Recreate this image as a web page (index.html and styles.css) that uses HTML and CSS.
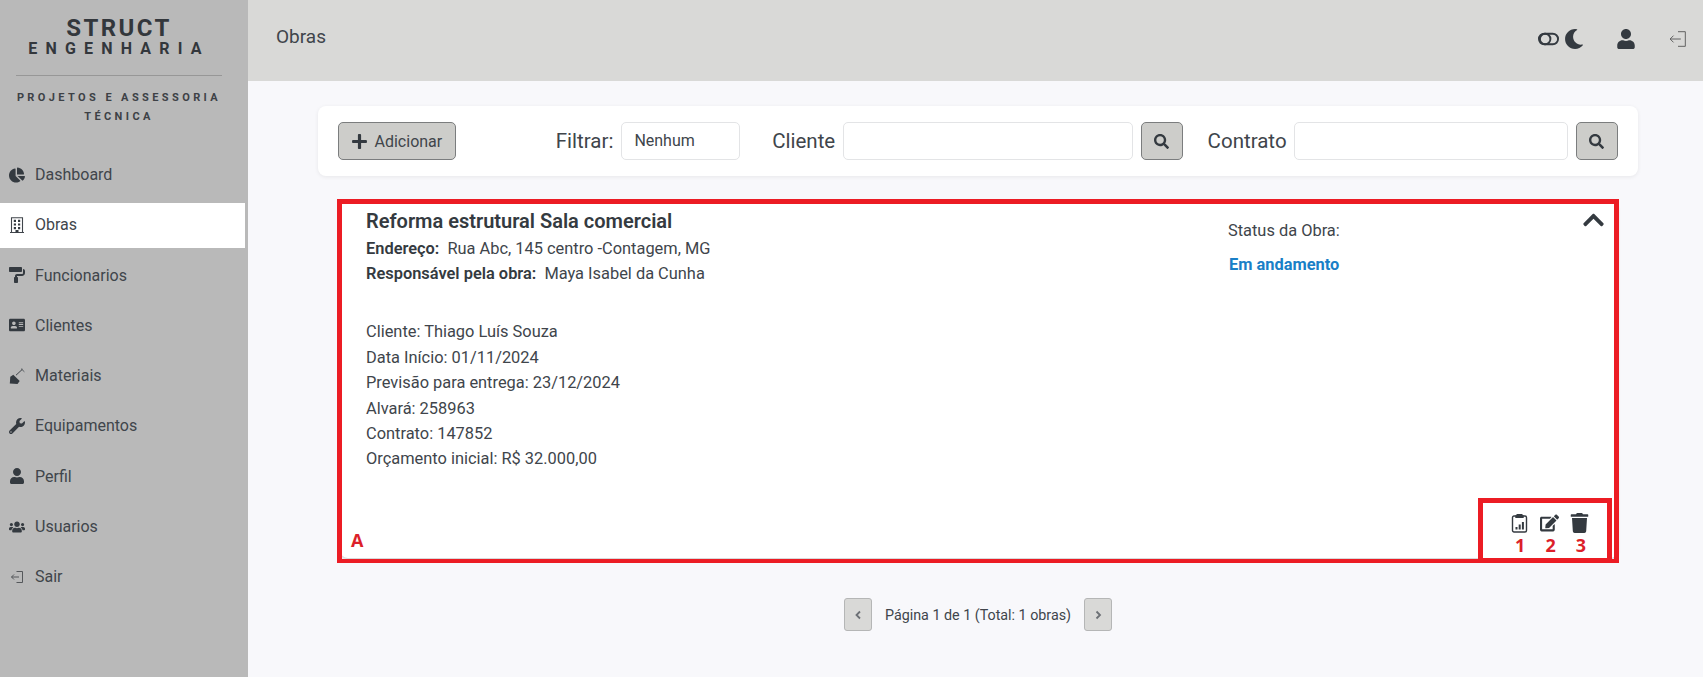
FILE: index.html
```html
<!DOCTYPE html>
<html lang="pt-BR">
<head>
	<meta charset="UTF-8">
	<title>Obras</title>
	<link rel="stylesheet" href="styles.css">
</head>
<body>
<div class="app">
	<aside class="sidebar">
		<div class="logo">
			<div class="logoMain">STRUCT</div>
			<div class="logoSub">ENGENHARIA</div>
			<hr class="logoLine">
			<div class="logoText">PROJETOS E ASSESSORIA<br>TÉCNICA</div>
		</div>
		<nav class="nav">
			<a class="navItem"><svg class="navIcon" viewBox="0 0 544 512"><path d="M527.79 288H290.5l158.03 158.03c6.04 6.04 15.98 6.53 22.19.68 38.7-36.46 65.32-85.61 73.13-140.86 1.34-9.46-6.51-17.85-16.06-17.85zm-15.83-64.8C503.72 103.74 408.26 8.28 288.8.04 279.68-.59 272 7.1 272 16.24V240h223.77c9.14 0 16.82-7.68 16.19-16.8zM224 288V50.71c0-9.55-8.39-17.4-17.84-16.06C86.99 51.49-4.1 155.6.14 280.37 4.5 408.51 114.83 513.59 243.03 511.98c50.4-.63 96.97-16.87 135.26-44.03 7.9-5.6 8.42-17.23 1.57-24.08L224 288z"/></svg>Dashboard</a>
			<a class="navItem active"><svg class="navIcon" viewBox="0 0 16 16"><path d="M1 15.500h14M2.500 15.500V.8h11v14.700" fill="none" stroke="currentColor" stroke-width="1.100"/><path d="M4.800 2.800h2.200V5H4.800zM9 2.800h2.200V5H9zM4.800 6.400h2.200v2.200H4.800zM9 6.400h2.200v2.200H9zM4.800 10h2.200v2.200H4.800zM9 10h2.200v2.200H9zM6.500 13h3v2.500h-3z"/></svg>Obras</a>
			<a class="navItem"><svg class="navIcon" viewBox="0 0 512 512"><path d="M416 128V32c0-17.67-14.33-32-32-32H32C14.33 0 0 14.33 0 32v96c0 17.67 14.33 32 32 32h352c17.67 0 32-14.33 32-32zm32-64v128c0 17.67-14.33 32-32 32H256c-35.35 0-64 28.65-64 64v32c-17.67 0-32 14.33-32 32v128c0 17.67 14.33 32 32 32h64c17.67 0 32-14.33 32-32V352c0-17.67-14.33-32-32-32v-32h160c53.02 0 96-42.98 96-96v-64c0-35.35-28.65-64-64-64z"/></svg>Funcionarios</a>
			<a class="navItem"><svg class="navIcon" viewBox="0 0 576 512"><path d="M528 32H48C21.5 32 0 53.500 0 80v352c0 26.5 21.500 48 48 48h480c26.5 0 48-21.5 48-48V80c0-26.5-21.5-48-48-48zm-352 96c35.3 0 64 28.7 64 64s-28.7 64-64 64-64-28.7-64-64 28.7-64 64-64zm112 236.8c0 10.6-10 19.2-22.4 19.2H86.4C74 384 64 375.400 64 364.8v-19.200c0-31.8 30.1-57.6 67.2-57.6h5c12.3 5.1 25.7 8 39.8 8s27.600-2.900 39.800-8h5c37.100 0 67.200 25.800 67.200 57.600v19.200zM512 312c0 4.400-3.600 8-8 8H360c-4.400 0-8-3.600-8-8v-16c0-4.400 3.600-8 8-8h144c4.400 0 8 3.600 8 8v16zm0-64c0 4.400-3.600 8-8 8H360c-4.400 0-8-3.600-8-8v-16c0-4.400 3.600-8 8-8h144c4.400 0 8 3.600 8 8v16zm0-64c0 4.400-3.600 8-8 8H360c-4.400 0-8-3.600-8-8v-16c0-4.400 3.600-8 8-8h144c4.400 0 8 3.600 8 8v16z"/></svg>Clientes</a>
			<a class="navItem"><svg class="navIcon" viewBox="0 0 16 16"><path d="M.8 15.600l.5-6.800 3-2 6.400 6.200-2.200 3z"/><path d="M7 7.200l6.500-6" fill="none" stroke="currentColor" stroke-width="1"/><path d="M12 .6l3.400 3.200" fill="none" stroke="currentColor" stroke-width=".8"/></svg>Materiais</a>
			<a class="navItem"><svg class="navIcon" viewBox="0 0 512 512"><path d="M507.73 109.1c-2.24-9.03-13.54-12.09-20.12-5.51l-74.36 74.36-67.88-11.31-11.31-67.88 74.36-74.36c6.62-6.62 3.43-17.9-5.66-20.16-47.38-11.74-99.55.91-136.58 37.93-39.64 39.64-50.55 97.1-34.05 147.2L18.74 402.76c-24.99 24.99-24.99 65.51 0 90.5 24.99 24.99 65.51 24.99 90.5 0l213.21-213.21c50.12 16.71 107.47 5.68 147.37-34.22 37.07-37.07 49.7-89.32 37.91-136.73zM64 472c-13.25 0-24-10.75-24-24 0-13.26 10.75-24 24-24s24 10.74 24 24c0 13.25-10.75 24-24 24z"/></svg>Equipamentos</a>
			<a class="navItem"><svg class="navIcon" viewBox="0 0 448 512"><path d="M224 256c70.7 0 128-57.3 128-128S294.7 0 224 0 96 57.3 96 128s57.3 128 128 128zm89.6 32h-16.7c-22.2 10.2-46.9 16-72.9 16s-50.6-5.8-72.9-16h-16.7C60.2 288 0 348.2 0 422.4V464c0 26.5 21.5 48 48 48h352c26.5 0 48-21.5 48-48v-41.6c0-74.2-60.2-134.4-134.4-134.4z"/></svg>Perfil</a>
			<a class="navItem"><svg class="navIcon" viewBox="0 0 640 512"><path d="M96 224c35.3 0 64-28.7 64-64s-28.7-64-64-64-64 28.7-64 64 28.7 64 64 64zm448 0c35.3 0 64-28.7 64-64s-28.7-64-64-64-64 28.7-64 64 28.7 64 64 64zm32 32h-64c-17.6 0-33.5 7.1-45.1 18.6 40.3 22.1 68.9 62 75.1 109.4h66c17.7 0 32-14.3 32-32v-32c0-35.3-28.7-64-64-64zm-256 0c61.9 0 112-50.1 112-112S381.9 32 320 32 208 82.1 208 144s50.1 112 112 112zm76.8 32h-8.3c-20.8 10-43.9 16-68.5 16s-47.6-6-68.5-16h-8.3C179.6 288 128 339.6 128 403.2V432c0 26.5 21.5 48 48 48h288c26.5 0 48-21.5 48-48v-28.8c0-63.6-51.6-115.2-115.2-115.2zm-223.7-13.4C161.5 263.1 145.6 256 128 256H64c-35.3 0-64 28.7-64 64v32c0 17.7 14.3 32 32 32h65.9c6.3-47.4 34.9-87.3 75.2-109.4z"/></svg>Usuarios</a>
			<a class="navItem"><svg class="navIcon lineIcon" viewBox="0 0 16 16"><path d="M7.500 2.500h6v11h-6M10 8H2.500M5 5.500L2.500 8 5 10.500"/></svg>Sair</a>
		</nav>
	</aside>

	<div class="content">
		<header class="topBar">
			<div class="pageTitle">Obras</div>
			<div class="topIcons">
				<div class="themeToggle">
					<svg class="toggleIcon" viewBox="0 0 22 14" fill="none" stroke="currentColor" stroke-width="2"><rect x="1" y="1.500" width="20" height="11" rx="5.500"/><circle cx="7.500" cy="7" r="5.500"/></svg>
					<svg class="moonIcon" viewBox="0 0 512 512"><path d="M283.211 512c78.962 0 151.079-35.925 198.857-94.792 7.068-8.708-.639-21.43-11.562-19.35-124.203 23.654-238.262-71.576-238.262-196.954 0-72.222 38.662-138.635 101.498-174.394 9.686-5.512 7.25-20.197-3.756-22.23A258.156 258.156 0 0 0 283.211 0c-141.309 0-256 114.511-256 256 0 141.309 114.511 256 256 256z"/></svg>
				</div>
				<svg class="userIcon" viewBox="0 0 448 512"><path d="M224 256c70.7 0 128-57.3 128-128S294.7 0 224 0 96 57.3 96 128s57.3 128 128 128zm89.6 32h-16.7c-22.2 10.2-46.9 16-72.9 16s-50.6-5.8-72.9-16h-16.7C60.2 288 0 348.2 0 422.4V464c0 26.5 21.5 48 48 48h352c26.5 0 48-21.5 48-48v-41.6c0-74.2-60.2-134.4-134.4-134.4z"/></svg>
				<svg class="exitIcon" viewBox="0 0 16 16" fill="none" stroke="currentColor" stroke-width=".8"><path d="M8 1.500h6.500v13H8M10.500 8H1M4 5L1 8l3 3"/></svg>
			</div>
		</header>

		<main class="pageBody">
			<section class="toolbar">
				<button class="btn addBtn"><svg class="plusIcon" viewBox="0 0 448 512"><path d="M416 208H272V64c0-17.67-14.33-32-32-32h-32c-17.67 0-32 14.33-32 32v144H32c-17.67 0-32 14.33-32 32v32c0 17.67 14.33 32 32 32h144v144c0 17.67 14.33 32 32 32h32c17.67 0 32-14.33 32-32V304h144c17.67 0 32-14.33 32-32v-32c0-17.67-14.33-32-32-32z"/></svg>Adicionar</button>
				<label class="fieldLabel filterLabel">Filtrar:</label>
				<div class="field selectField">Nenhum</div>
				<label class="fieldLabel clientLabel">Cliente</label>
				<div class="field clientField"></div>
				<button class="btn searchBtn"><svg class="searchIcon" viewBox="0 0 512 512"><path d="M505 442.700L405.300 343c-4.500-4.500-10.600-7-17-7H372c27.600-35.300 44-79.700 44-128C416 93.100 322.900 0 208 0S0 93.100 0 208s93.100 208 208 208c48.300 0 92.700-16.400 128-44v16.300c0 6.400 2.500 12.500 7 17l99.700 99.700c9.400 9.400 24.600 9.400 33.900 0l28.300-28.300c9.400-9.400 9.400-24.600.1-34zM208 336c-70.700 0-128-57.200-128-128 0-70.700 57.200-128 128-128 70.700 0 128 57.200 128 128 0 70.700-57.200 128-128 128z"/></svg></button>
				<label class="fieldLabel contractLabel">Contrato</label>
				<div class="field contractField"></div>
				<button class="btn searchBtn"><svg class="searchIcon" viewBox="0 0 512 512"><path d="M505 442.700L405.300 343c-4.500-4.500-10.600-7-17-7H372c27.600-35.300 44-79.700 44-128C416 93.100 322.900 0 208 0S0 93.100 0 208s93.100 208 208 208c48.300 0 92.700-16.400 128-44v16.300c0 6.400 2.500 12.500 7 17l99.700 99.700c9.400 9.400 24.600 9.400 33.900 0l28.300-28.300c9.400-9.400 9.400-24.600.1-34zM208 336c-70.700 0-128-57.200-128-128 0-70.700 57.200-128 128-128 70.700 0 128 57.200 128 128 0 70.700-57.200 128-128 128z"/></svg></button>
			</section>

			<section class="card">
				<div class="cardTop">
					<div class="cardInfo">
						<h2 class="cardTitle">Reforma estrutural Sala comercial</h2>
						<p class="line"><b>Endereço:</b>&nbsp; Rua Abc, 145 centro -Contagem, MG</p>
						<p class="line"><b>Responsável pela obra:</b>&nbsp; Maya Isabel da Cunha</p>
						<div class="details">
							<p class="line">Cliente: Thiago Luís Souza</p>
							<p class="line">Data Início: 01/11/2024</p>
							<p class="line">Previsão para entrega: 23/12/2024</p>
							<p class="line">Alvará: 258963</p>
							<p class="line">Contrato: 147852</p>
							<p class="line">Orçamento inicial: R$ 32.000,00</p>
						</div>
					</div>
					<div class="cardStatus">
						<p class="statusLabel">Status da Obra:</p>
						<p class="statusValue">Em andamento</p>
					</div>
					<svg class="chevronIcon" viewBox="0 0 448 512"><path d="M240.971 130.524l194.343 194.343c9.373 9.373 9.373 24.569 0 33.941l-22.667 22.667c-9.357 9.357-24.522 9.375-33.901.04L224 227.495 69.255 381.516c-9.379 9.335-24.544 9.317-33.901-.04l-22.667-22.667c-9.373-9.373-9.373-24.569 0-33.941L207.03 130.525c9.372-9.373 24.568-9.373 33.941-.001z"/></svg>
				</div>
				<div class="cardActions">
					<svg class="actionIcon" viewBox="0 0 16 20"><path d="M2.500 3h11a1.500 1.500 0 0 1 1.500 1.500v13a1.500 1.500 0 0 1-1.500 1.500h-11A1.500 1.500 0 0 1 1 17.500v-13A1.500 1.500 0 0 1 2.500 3z" fill="none" stroke="currentColor" stroke-width="1.400"/><path d="M5 1h6v1.200h1.200V5H3.800V2.200H5zM4 14h2v2.500H4zM7.200 11.500h2v5h-2zM10.400 9h2v7.500h-2z"/></svg>
					<svg class="actionIcon" viewBox="0 0 576 512"><path d="M402.600 83.200l90.200 90.200c3.800 3.800 3.800 10 0 13.800L274.400 405.600l-92.800 10.300c-12.400 1.400-22.900-9.100-21.500-21.500l10.300-92.800L388.800 83.200c3.800-3.800 10-3.800 13.800 0zm162-22.900l-48.800-48.800c-15.200-15.200-39.900-15.200-55.200 0l-35.400 35.400c-3.800 3.800-3.800 10 0 13.800l90.200 90.200c3.800 3.800 10 3.800 13.800 0l35.400-35.400c15.200-15.300 15.200-40 0-55.200zM384 346.200V448H64V128h229.800c3.200 0 6.200-1.300 8.500-3.500l40-40c7.600-7.600 2.200-20.500-8.500-20.500H48C21.500 64 0 85.500 0 112v352c0 26.500 21.500 48 48 48h352c26.500 0 48-21.500 48-48V306.200c0-10.700-12.900-16-20.500-8.500l-40 40c-2.200 2.300-3.500 5.300-3.500 8.500z"/></svg>
					<svg class="actionIcon" viewBox="0 0 448 512"><path d="M432 32H312l-9.400-18.700A24 24 0 0 0 281.100 0H166.800a23.720 23.720 0 0 0-21.400 13.300L136 32H16A16 16 0 0 0 0 48v32a16 16 0 0 0 16 16h416a16 16 0 0 0 16-16V48a16 16 0 0 0-16-16zM53.200 467a48 48 0 0 0 47.900 45h245.800a48 48 0 0 0 47.900-45L416 128H32z"/></svg>
				</div>
				<!-- red marks drawn over the screenshot -->
				<div class="markOuter"><span class="markLetter">A</span></div>
				<div class="markInner">
					<span class="markNum">1</span>
					<span class="markNum">2</span>
					<span class="markNum">3</span>
				</div>
			</section>

			<div class="pager">
				<button class="pageBtn"><svg class="pageArrow" viewBox="0 0 10 12" fill="none" stroke="currentColor" stroke-width="1.800"><path d="M7 2.500L3.500 6 7 9.500"/></svg></button>
				<span class="pageText">Página 1 de 1 (Total: 1 obras)</span>
				<button class="pageBtn"><svg class="pageArrow" viewBox="0 0 10 12" fill="none" stroke="currentColor" stroke-width="1.800"><path d="M3.500 2.500L7 6 3.500 9.500"/></svg></button>
			</div>
		</main>
	</div>
</div>
</body>
</html>
```

FILE: styles.css
```css
html, body
{
	margin: 0;
	padding: 0;
	height: 100%;
	overflow: hidden;
	font-family: Roboto, "Liberation Sans", sans-serif;
	color: #343a40;
	background: #f8f8fb;
}

.app
{
	display: flex;
	height: 677px;
}

/* sidebar */
.sidebar
{
	width: 248px;
	flex: none;
	background: #b9b9b9;
}

.logo
{
	padding: 16px 26px 0 16px;
	text-align: center;
	height: 138px;
	box-sizing: border-box;
}

.logoMain
{
	font-size: 24px;
	font-weight: 700;
	letter-spacing: 2.4px;
	line-height: 24px;
	color: #33373c;
}

.logoSub
{
	font-size: 16px;
	font-weight: 700;
	letter-spacing: 8.2px;
	line-height: 18px;
	color: #33373c;
}

.logoLine
{
	border: none;
	border-top: 1px solid #979797;
	margin: 17px 0 12px;
}

.logoText
{
	font-size: 11px;
	font-weight: 700;
	letter-spacing: 3.4px;
	line-height: 19px;
	white-space: nowrap;
	color: #3d4146;
}

.nav
{
	display: flex;
	flex-direction: column;
	gap: 5.3px;
	padding-top: 15px;
}

.navItem
{
	display: flex;
	align-items: center;
	gap: 10px;
	height: 45px;
	width: 245px;
	padding: 0 0 2px 9px;
	box-sizing: border-box;
	font-size: 16px;
	color: #40454b;
}

.navItem.active
{
	background: #fff;
}

.navIcon
{
	width: 16px;
	height: 16px;
	flex: none;
	fill: #343a40;
}

.navIcon.lineIcon
{
	fill: none;
	stroke: #4a4d50;
	stroke-width: 0.9;
}

/* top bar */
.content
{
	flex: 1;
	min-width: 0;
	display: flex;
	flex-direction: column;
}

.topBar
{
	height: 81px;
	flex: none;
	display: flex;
	align-items: center;
	justify-content: space-between;
	padding: 0 16px 0 28px;
	background: #d9d9d7;
}

.pageTitle
{
	font-size: 19px;
	color: #40454b;
	margin-bottom: 8px;
}

.topIcons
{
	display: flex;
	align-items: center;
	margin-bottom: 4px;
	color: #343a40;
	fill: #343a40;
}

.themeToggle
{
	display: flex;
	align-items: center;
	gap: 5px;
	margin-right: 33px;
}

.toggleIcon
{
	width: 21px;
	height: 14px;
}

.moonIcon
{
	width: 20px;
	height: 20px;
}

.userIcon
{
	width: 18px;
	height: 20px;
	margin-right: 34px;
}

.exitIcon
{
	width: 18px;
	height: 18px;
	color: #555;
}

/* toolbar */
.pageBody
{
	padding: 25px 65px 0 70px;
}

.toolbar
{
	display: flex;
	align-items: center;
	height: 70px;
	padding: 0 20px;
	box-sizing: border-box;
	background: #fff;
	border-radius: 8px;
	box-shadow: 0 1px 4px rgba(0, 0, 0, 0.07);
}

.btn
{
	display: flex;
	align-items: center;
	justify-content: center;
	height: 38px;
	padding: 0;
	box-sizing: border-box;
	background: #cdcdca;
	border: 1px solid #7b7d7e;
	border-radius: 5px;
	font-family: inherit;
	font-size: 16px;
	color: #40454b;
}

.addBtn
{
	width: 118px;
	gap: 8px;
}

.plusIcon
{
	width: 15px;
	height: 17px;
	fill: #343a40;
}

.searchBtn
{
	width: 42px;
	margin-left: 8px;
	flex: none;
}

.searchIcon
{
	width: 15px;
	height: 15px;
	fill: #343a40;
}

.fieldLabel
{
	font-size: 20.5px;
	color: #40454b;
}

.filterLabel
{
	margin-left: 100px;
	margin-right: 8px;
}

.clientLabel
{
	margin-left: 32px;
	margin-right: 8px;
}

.contractLabel
{
	margin-left: 25px;
	margin-right: 7px;
}

.field
{
	height: 38px;
	box-sizing: border-box;
	background: #fff;
	border: 1px solid #e3e4e6;
	border-radius: 5px;
	font-size: 16px;
	line-height: 36px;
	color: #40454b;
}

.selectField
{
	width: 119px;
	padding-left: 12px;
}

.clientField
{
	width: 290px;
}

.contractField
{
	width: 275px;
}

/* card */
.card
{
	position: relative;
	display: flex;
	flex-direction: column;
	justify-content: space-between;
	height: 357px;
	margin: 25px 20px 0 22px;
	background: #fff;
	border-radius: 8px;
	box-shadow: 0 1px 3px rgba(0, 0, 0, 0.2);
}

.cardTop
{
	display: grid;
	grid-template-columns: 862px 1fr auto;
	padding: 6px 14px 0 26px;
}

.cardTitle
{
	margin: 0;
	font-size: 20px;
	font-weight: 600;
	line-height: 29px;
	color: #343a40;
}

.line
{
	margin: 0;
	font-size: 16.4px;
	line-height: 25.4px;
	color: #40454b;
}

.line b
{
	font-weight: 600;
	color: #343a40;
}

.details
{
	margin-top: 32.6px;
}

.cardStatus
{
	padding-top: 11px;
}

.statusLabel
{
	margin: 0;
	font-size: 16.4px;
	line-height: 25px;
	color: #40454b;
}

.statusValue
{
	margin: 9px 0 0 1px;
	font-size: 16.4px;
	font-weight: 700;
	line-height: 25px;
	color: #1a7fc7;
}

.chevronIcon
{
	width: 21px;
	height: 24px;
	margin-top: 1px;
	fill: #343a40;
}

.cardActions
{
	display: flex;
	justify-content: flex-end;
	align-items: center;
	gap: 11px;
	padding: 0 29px 25px 0;
}

.actionIcon
{
	width: 19px;
	height: 20px;
	fill: #343a40;
	color: #343a40;
}

/* annotation boxes */
.markOuter
{
	position: absolute;
	left: -3px;
	right: -1px;
	top: -2px;
	bottom: -5px;
	border: 5px solid #ec1c24;
	border-bottom-width: 4px;
}

.markInner
{
	position: absolute;
	right: 6px;
	bottom: -5px;
	width: 134px;
	height: 65px;
	box-sizing: border-box;
	border: 5px solid #ec1c24;
	display: flex;
	align-items: flex-end;
	justify-content: flex-end;
	gap: 20px;
	padding: 0 21px 3px 0;
}

.markLetter
{
	position: absolute;
	left: 9px;
	bottom: 9px;
	font-family: "Open Sans", sans-serif;
	font-weight: 700;
	font-size: 18px;
	line-height: 20px;
	color: #dc1f2a;
}

.markNum
{
	font-family: "Open Sans", sans-serif;
	font-weight: 700;
	font-size: 18px;
	line-height: 20px;
	color: #dc1f2a;
}

/* pagination */
.pager
{
	display: flex;
	align-items: center;
	justify-content: center;
	gap: 13px;
	margin-top: 40px;
}

.pageBtn
{
	display: flex;
	align-items: center;
	justify-content: center;
	width: 28px;
	height: 33px;
	padding: 0;
	background: #d9d9d7;
	border: 1px solid #b5b6b6;
	border-radius: 3px;
	color: #6c7075;
}

.pageArrow
{
	width: 10px;
	height: 12px;
}

.pageText
{
	font-size: 14.3px;
	color: #40454b;
}
```
